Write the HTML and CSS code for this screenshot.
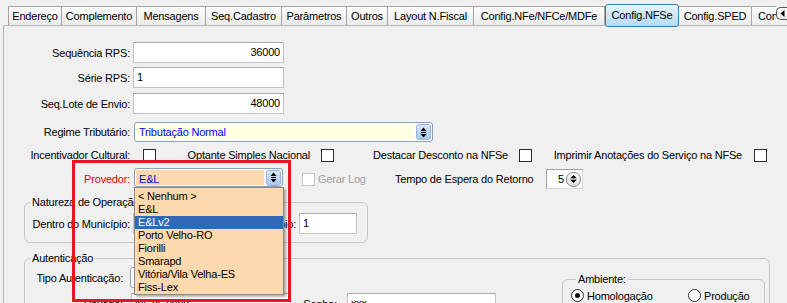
FILE: index.html
```html
<!DOCTYPE html>
<html lang="pt-BR">
<head>
    <meta charset="UTF-8" />
    <meta name="viewport" content="width=device-width, initial-scale=1.0" />
    <title>Config.NFSe</title>
    <link rel="stylesheet" href="styles.css">
</head>
<body>
    <!-- Tabs -->
    <div class="tabstrip">
        <span class="tab">Endereço</span>
        <span class="tab">Complemento</span>
        <span class="tab">Mensagens</span>
        <span class="tab">Seq.Cadastro</span>
        <span class="tab">Parâmetros</span>
        <span class="tab">Outros</span>
        <span class="tab">Layout N.Fiscal</span>
        <span class="tab">Config.NFe/NFCe/MDFe</span>
        <span class="tab active">Config.NFSe</span>
        <span class="tab">Config.SPED</span>
        <span class="tab cut">Config.Contábil</span>
        <span class="tab-scroll">
            <svg width="5" height="7" viewBox="0 0 5 7"><polygon points="4.5,0 4.5,7 0.5,3.5" fill="#000"/></svg>
        </span>
    </div>

    <!-- Tab page -->
    <div class="page">
        <div class="row r1">
            <span class="lbl">Sequência RPS:</span>
            <span class="edit num">36000</span>
        </div>
        <div class="row r2">
            <span class="lbl">Série RPS:</span>
            <span class="edit">1</span>
        </div>
        <div class="row r3">
            <span class="lbl">Seq.Lote de Envio:</span>
            <span class="edit num">48000</span>
        </div>
        <div class="row r4">
            <span class="lbl">Regime Tributário:</span>
            <div class="combo combo-regime">
                <span class="combo-text">Tributação Normal</span>
                <span class="combo-btn">
                    <svg width="7" height="11" viewBox="0 0 7 11"><polygon points="0.5,4 3.5,0.5 6.5,4" fill="#000"/><rect x="1" y="5" width="5" height="1" fill="#000"/><polygon points="0.5,7 6.5,7 3.5,10.5" fill="#000"/></svg>
                </span>
            </div>
        </div>
        <div class="row r5">
            <span class="lbl">Incentivador Cultural:</span>
            <span class="check c1"></span>
            <span class="clbl w-optante">Optante Simples Nacional</span>
            <span class="check c2"></span>
            <span class="clbl w-destacar">Destacar Desconto na NFSe</span>
            <span class="check c2"></span>
            <span class="clbl w-imprimir">Imprimir Anotações do Serviço na NFSe</span>
            <span class="check c3"></span>
        </div>
        <div class="row r6">
            <span class="lbl lbl-red">Provedor:</span>
            <div class="combo combo-prov">
                <span class="combo-text">E&amp;L</span>
                <span class="combo-btn">
                    <svg width="7" height="11" viewBox="0 0 7 11"><polygon points="0.5,4 3.5,0.5 6.5,4" fill="#000"/><rect x="1" y="5" width="5" height="1" fill="#000"/><polygon points="0.5,7 6.5,7 3.5,10.5" fill="#000"/></svg>
                </span>
            </div>
            <span class="check off"></span>
            <span class="gerar">Gerar Log</span>
            <span class="tempo">Tempo de Espera do Retorno</span>
            <div class="spin">
                <span class="spin-val">5</span>
                <span class="spin-btn">
                    <svg width="7" height="10" viewBox="0 0 7 10"><polygon points="0.5,4 3.5,1 6.5,4" fill="#000"/><rect x="0.5" y="4.5" width="6" height="1" fill="#555"/><polygon points="0.5,6 6.5,6 3.5,9" fill="#000"/></svg>
                </span>
            </div>
        </div>

        <fieldset class="group natureza">
            <legend>Natureza de Operação</legend>
            <div class="row">
                <span class="lbl lbl-dentro">Dentro do Município:</span>
                <span class="edit e-dentro">1</span>
                <span class="lbl lbl-fora">Fora do Município:</span>
                <span class="edit e-fora">1</span>
            </div>
        </fieldset>

        <fieldset class="group auth">
            <legend>Autenticação</legend>
            <div class="auth-body">
                <div class="auth-left">
                    <div class="row">
                        <span class="lbl lbl-auth">Tipo Autenticação:</span>
                        <div class="combo combo-tipo">
                            <span class="combo-text">Usuário e Senha</span>
                            <span class="combo-btn">
                                <svg width="7" height="11" viewBox="0 0 7 11"><polygon points="0.5,4 3.5,0.5 6.5,4" fill="#000"/><rect x="1" y="5" width="5" height="1" fill="#000"/><polygon points="0.5,7 6.5,7 3.5,10.5" fill="#000"/></svg>
                            </span>
                        </div>
                    </div>
                    <div class="row r-user">
                        <span class="lbl lbl-auth">Usuário:</span>
                        <span class="edit e-user">ipt_dl_chpd</span>
                        <span class="lbl lbl-senha">Senha:</span>
                        <span class="edit e-senha">xxx</span>
                    </div>
                </div>
                <fieldset class="group ambiente">
                    <legend>Ambiente:</legend>
                    <div class="radios">
                        <span class="radio-item r-homolog"><span class="radio on"></span>Homologação</span>
                        <span class="radio-item"><span class="radio"></span>Produção</span>
                    </div>
                </fieldset>
            </div>
        </fieldset>
    </div>

    <!-- Open provider list and highlight frame -->
    <ul class="dropdown">
        <li>&lt; Nenhum &gt;</li>
        <li>E&amp;L</li>
        <li class="selected">E&amp;Lv2</li>
        <li>Porto Velho-RO</li>
        <li>Fiorilli</li>
        <li>Smarapd</li>
        <li>Vitória/Vila Velha-ES</li>
        <li>Fiss-Lex</li>
    </ul>
    <div class="highlight"></div>
</body>
</html>
```

FILE: styles.css
```css
/* Base */
* {
    box-sizing: border-box;
}

body {
    margin: 0;
    width: 787px;
    height: 303px;
    overflow: hidden;
    position: relative;
    background: #f0f0f0;
    font-family: "Liberation Sans", Arial, sans-serif;
    font-size: 11px;
    letter-spacing: -0.2px;
    color: #000;
}

/* Tab strip */
.tabstrip {
    display: flex;
    align-items: flex-end;
    height: 25px;
    padding-left: 8px;
    position: relative;
    z-index: 1;
}

.tab {
    flex: none;
    height: 19px;
    padding-top: 1px;
    line-height: 17px;
    text-align: center;
    white-space: nowrap;
    background: linear-gradient(#fdfdfd, #ebebeb);
    border-top: 1px solid #a3a3a3;
    border-right: 1px solid #a3a3a3;
}

.tab:nth-child(1) { width: 54px; border-left: 1px solid #a3a3a3; }
.tab:nth-child(2) { width: 75px; }
.tab:nth-child(3) { width: 69px; }
.tab:nth-child(4) { width: 76px; }
.tab:nth-child(5) { width: 65px; }
.tab:nth-child(6) { width: 41px; }
.tab:nth-child(7) { width: 86px; }
.tab:nth-child(8) { width: 131px; }
.tab:nth-child(10) { width: 73px; }

.tab.active {
    width: 74px;
    height: 23px;
    margin-bottom: -2px;
    padding-top: 0;
    line-height: 20px;
    background: linear-gradient(#e6f4fd, #b3daf6);
    border: 1px solid #3c7fb1;
    border-radius: 3px;
}

.tab.cut {
    width: 24px;
    overflow: hidden;
    text-align: left;
    padding-left: 6px;
    border-right: none;
}

.tab-scroll {
    flex: none;
    width: 14px;
    height: 13px;
    margin-bottom: 5px;
    display: flex;
    align-items: center;
    padding-left: 3px;
    background: linear-gradient(#ffffff, #e6e6e6);
    border: 1px solid #555;
    border-right: none;
    border-radius: 5px 0 0 5px;
}

/* Tab page */
.page {
    margin-left: 3px;
    height: 290px;
    border-left: 1px solid #b4b4b4;
    border-top: 1px solid #b4b4b4;
    border-top-left-radius: 2px;
}

.row {
    display: flex;
    align-items: center;
}

.r1 { margin-top: 16px; }
.r2 { margin-top: 4px; }
.r3 { margin-top: 5px; }
.r4 { margin-top: 8px; }
.r5 { margin-top: 6px; height: 14px; }
.r6 { margin-top: 6px; height: 22px; }

.lbl {
    flex: none;
    width: 126px;
    text-align: right;
    white-space: nowrap;
}

.lbl-red {
    color: #e8000b;
}

.edit {
    flex: none;
    width: 151px;
    height: 21px;
    margin-left: 3px;
    padding: 0 3px;
    line-height: 19px;
    background: #fff;
    border: 1px solid #c2c2c2;
    border-top-color: #a9a9a9;
    white-space: nowrap;
    overflow: hidden;
}

.edit.num {
    text-align: right;
}

/* Combo boxes */
.combo {
    flex: none;
    display: flex;
    align-items: center;
    height: 20px;
    margin-left: 4px;
    padding: 1px;
    border: 1px solid #8c9fb8;
    border-radius: 3px;
    background: #fff;
}

.combo-text {
    flex: 1;
    align-self: stretch;
    padding-left: 3px;
    line-height: 16px;
    color: #0000ff;
    white-space: nowrap;
    overflow: hidden;
}

.combo-btn {
    flex: none;
    width: 15px;
    height: 16px;
    margin-left: 2px;
    display: flex;
    align-items: center;
    justify-content: center;
    background: linear-gradient(#d8e7fa, #a8c8f0);
    border: 1px solid #93b2e3;
    border-radius: 3px;
}

.combo-regime {
    width: 299px;
}

.combo-regime .combo-text {
    background: #ffffe1;
}

.combo-prov {
    width: 149px;
    height: 19px;
    align-self: flex-start;
}

.combo-prov .combo-text {
    background: #ffd9ae;
    padding-top: 1px;
}

.combo-tipo {
    width: 150px;
    height: 21px;
    margin-left: 7px;
}

.combo-tipo .combo-text {
    color: #000;
}

/* Check boxes */
.check {
    flex: none;
    width: 13px;
    height: 13px;
    background: #fff;
    border: 1px solid #2c2c2c;
}

.c1 { margin-left: 13px; }
.c2 { margin-left: 11px; }
.c3 { margin-left: 12px; }

.check.off {
    margin-left: 19px;
    border-color: #c4c4c4;
}

.clbl {
    flex: none;
    text-align: right;
    white-space: nowrap;
}

.w-optante { width: 154px; }
.w-destacar { width: 174px; }
.w-imprimir { width: 210px; }

.gerar {
    flex: none;
    width: 80px;
    padding-left: 3px;
    color: #a0a0a0;
}

.tempo {
    flex: none;
    width: 151px;
    white-space: nowrap;
}

.spin {
    flex: none;
    display: flex;
    align-items: center;
    width: 37px;
    height: 20px;
    background: #fff;
    border: 1px solid #a0a0a0;
    border-right-color: #dadada;
    border-bottom-color: #dadada;
}

.spin-val {
    flex: 1;
    text-align: right;
    padding-right: 2px;
}

.spin-btn {
    flex: none;
    width: 15px;
    height: 15px;
    margin-right: 1px;
    display: flex;
    align-items: center;
    justify-content: center;
    background: linear-gradient(#ffffff, #dcdcdc);
    border: 1px solid #8a8a8a;
    border-radius: 7px;
}

/* Group boxes */
.group {
    margin: 0;
    padding: 0;
    min-inline-size: 0;
    border: 1px solid #c6c6c6;
    border-radius: 6px;
}

.group legend {
    margin-left: 5px;
    padding: 0 2px;
    line-height: 13px;
}

.natureza {
    width: 344px;
    margin: 6px 0 0 20px;
    padding: 4px 0 8px 0;
}

.lbl-dentro { width: 105px; }
.e-dentro { width: 70px; }
.lbl-fora { width: 93px; }
.e-fora { width: 58px; }

.auth {
    width: 746px;
    height: 80px;
    margin: 9px 0 0 20px;
}

.auth-body {
    display: flex;
    align-items: flex-start;
}

.auth-left {
    flex: none;
    width: 537px;
    padding-top: 2px;
}

.lbl-auth { width: 98px; }

.r-user {
    margin-top: 5px;
}

.e-user {
    width: 160px;
    margin-left: 8px;
}

.lbl-senha { width: 46px; }

.e-senha {
    width: 149px;
    margin-left: 10px;
}

.ambiente {
    width: 203px;
    height: 40px;
    margin-top: 8px;
    padding: 3px 0 0 8px;
}

.radios {
    display: flex;
    align-items: center;
}

.radio-item {
    display: flex;
    align-items: center;
}

.r-homolog {
    width: 117px;
}

.radio {
    width: 13px;
    height: 13px;
    margin-right: 3px;
    border: 1px solid #2c2c2c;
    border-radius: 50%;
    background: #fff;
    display: flex;
    align-items: center;
    justify-content: center;
}

.radio.on::after {
    content: "";
    width: 5px;
    height: 5px;
    border-radius: 50%;
    background: #111;
}

/* Open list over the form */
.dropdown {
    position: absolute;
    left: 134px;
    top: 187px;
    width: 150px;
    margin: 0;
    padding: 2px 0 0 0;
    list-style: none;
    background: #ffd9ae;
    border: 1px solid #8a8a8a;
    box-shadow: 2px 2px 2px rgba(0, 0, 0, 0.3);
    z-index: 2;
}

.dropdown li {
    height: 13px;
    line-height: 13px;
    padding-left: 3px;
    white-space: nowrap;
}

.dropdown li.selected {
    background: #3168b8;
    color: #fff;
}

.highlight {
    position: absolute;
    left: 72px;
    top: 160px;
    width: 219px;
    height: 142px;
    border: 3px solid #e8141e;
    z-index: 3;
}
```
